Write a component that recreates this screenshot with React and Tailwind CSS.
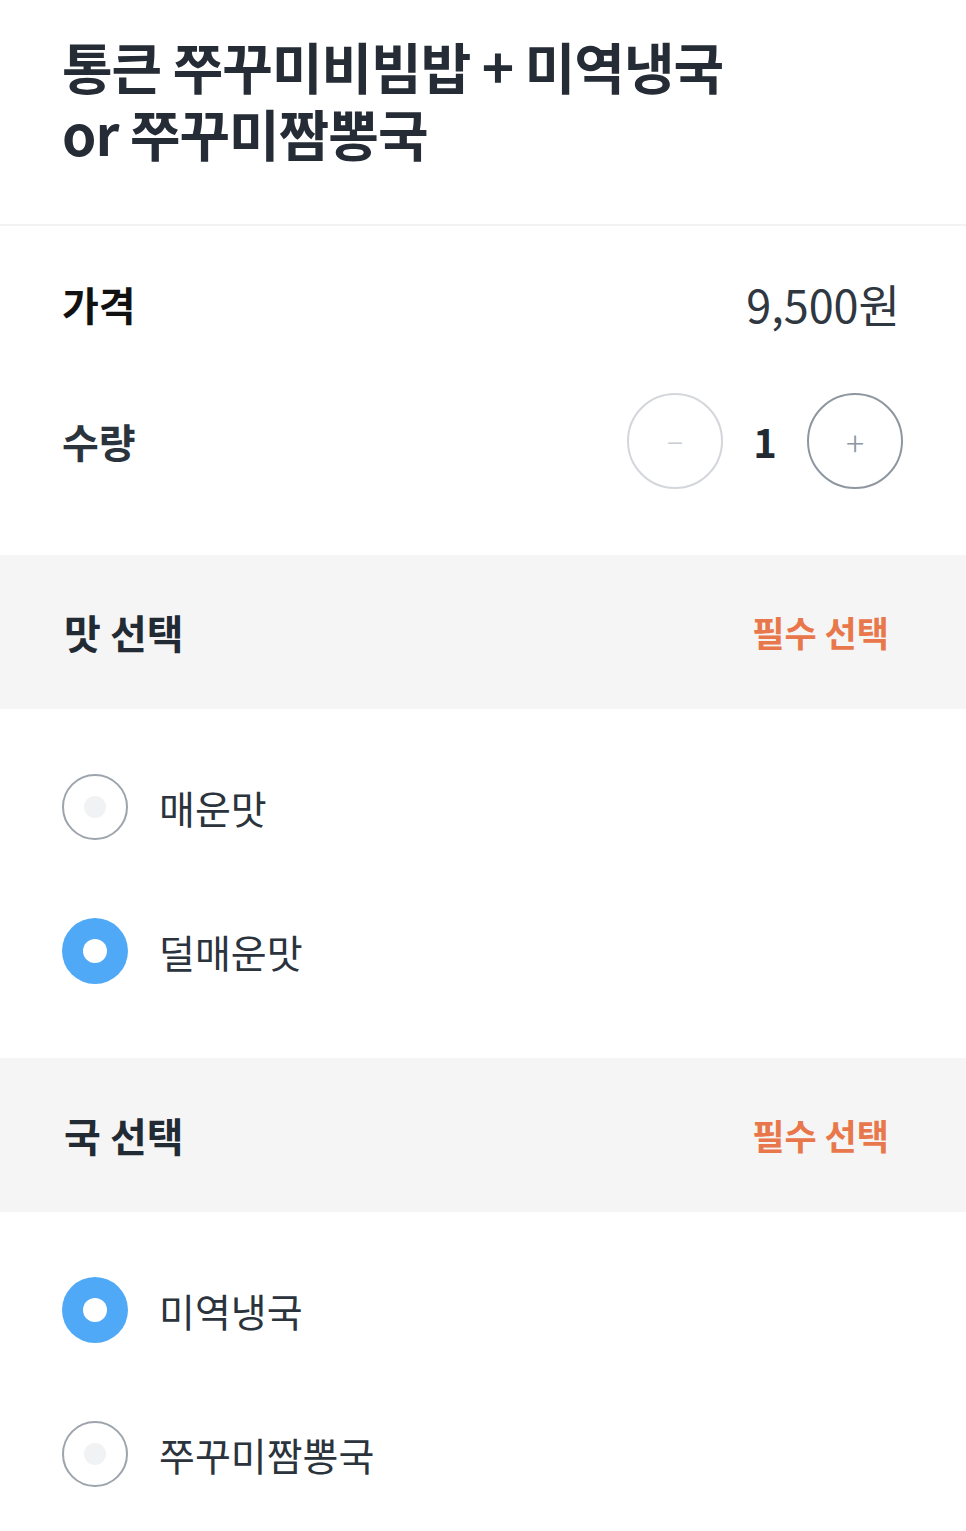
import { useState } from 'react';

const font = { fontFamily: '"Noto Sans CJK KR", "Noto Sans", sans-serif' };

function Radio({ checked }) {
  if (checked) {
    return (
      <span className="flex h-[66px] w-[66px] shrink-0 items-center justify-center rounded-full bg-[#4fa9f6]">
        <span className="h-[24px] w-[24px] rounded-full bg-white" />
      </span>
    );
  }
  return (
    <span className="flex h-[66px] w-[66px] shrink-0 items-center justify-center rounded-full border-2 border-[#9ea4ac] bg-white">
      <span className="h-[22px] w-[22px] rounded-full bg-[#f1f2f4]" />
    </span>
  );
}

function OptionGroup({ title, options, selected, onSelect }) {
  return (
    <div>
      <div className="flex h-[154px] items-center justify-between bg-[#f5f5f5] pl-[64px] pr-[77px]">
        <span className="text-[40px] font-bold text-[#222a33]">{title}</span>
        <span className="text-[35px] font-bold text-[#e9774c]">필수 선택</span>
      </div>
      <div className="pt-[26px] pb-[35px]">
        {options.map(opt => (
          <button
            key={opt}
            onClick={() => onSelect(opt)}
            className="flex h-[144px] w-full items-center gap-[31px] pl-[62px] text-left"
          >
            <Radio checked={selected === opt} />
            <span className="text-[39px] text-[#2b333d]">{opt}</span>
          </button>
        ))}
      </div>
    </div>
  );
}

export default function App() {
  const [qty, setQty] = useState(1);
  const [taste, setTaste] = useState('덜매운맛');
  const [soup, setSoup] = useState('미역냉국');

  return (
    <div className="min-h-screen w-full bg-white" style={font}>
      <div className="px-[62px] pt-[32px] pb-[58px]">
        <h1 className="text-[55px] font-bold leading-[67px] tracking-[-1px] text-[#252c35]">
          <span className="block">통큰 쭈꾸미비빔밥 + 미역냉국</span>
          <span className="block">or 쭈꾸미짬뽕국</span>
        </h1>
      </div>
      <div className="h-[2px] bg-[#f2f3f5]" />

      <div className="pl-[62px] pr-[63px] pt-[45px] pb-[66px]">
        <div className="flex h-[66px] items-center justify-between">
          <span className="text-[40px] font-bold text-[#111]">가격</span>
          <span className="pr-[3px] text-[45px] text-[#2f3740]">9,500원</span>
        </div>
        <div className="mt-[56px] flex h-[96px] items-center justify-between">
          <span className="text-[40px] font-bold text-[#2b333d]">수량</span>
          <div className="flex items-center">
            <button
              onClick={() => setQty(q => Math.max(1, q - 1))}
              className="flex h-[96px] w-[96px] items-center justify-center rounded-full border-2 border-[#d3d6da] text-[30px] font-light text-[#c9cdd2]"
            >
              −
            </button>
            <span className="w-[84px] text-center text-[40px] font-bold text-[#222a33]">{qty}</span>
            <button
              onClick={() => setQty(q => q + 1)}
              className="flex h-[96px] w-[96px] items-center justify-center rounded-full border-2 border-[#8e969f] text-[34px] font-light text-[#8e969f]"
            >
              +
            </button>
          </div>
        </div>
      </div>

      <OptionGroup title="맛 선택" options={['매운맛', '덜매운맛']} selected={taste} onSelect={setTaste} />
      <OptionGroup title="국 선택" options={['미역냉국', '쭈꾸미짬뽕국']} selected={soup} onSelect={setSoup} />
    </div>
  );
}
